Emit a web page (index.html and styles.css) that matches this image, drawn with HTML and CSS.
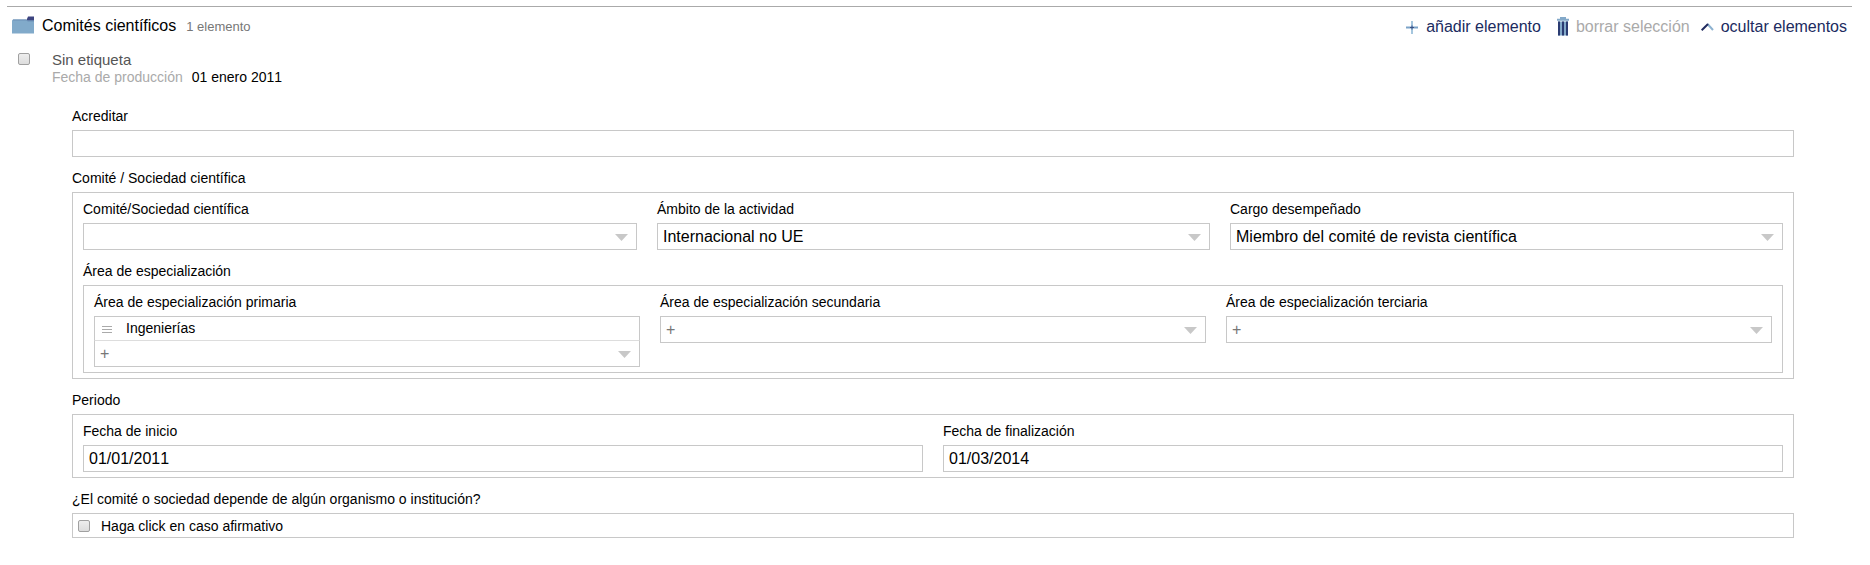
FILE: index.html
```html
<!DOCTYPE html>
<html lang="es">
<head>
<meta charset="utf-8">
<title>Comités científicos</title>
<link rel="stylesheet" href="styles.css">
</head>
<body>
<section class="collection">
  <header class="header">
    <svg class="folder" width="22" height="18" viewBox="0 0 22 18"><path d="M14.500 4L16 .5H22V5H14.500Z" fill="#3d4480"/><path d="M0 4.500L1 3.500H14L15.500 4.500H22V17.500H0Z" fill="#81aaca"/><path d="M1 4H14.500L15.500 5H22" stroke="#6c8fb5" fill="none"/></svg>
    <h1 class="title">Comités científicos</h1>
    <span class="count">1 elemento</span>
    <nav class="actions">
      <a class="action add"><svg width="12" height="13" viewBox="0 0 12 13"><path d="M6 0V13" stroke="#a5c6de" stroke-width="2"/><path d="M0 6.500H12" stroke="#7ba3c8" stroke-width="2"/><path d="M6 4.500V8.500M4 6.500H8" stroke="#3a5288"/></svg>añadir elemento</a>
      <a class="action remove"><svg width="12" height="19" viewBox="0 0 12 19"><path d="M4 2V.8H8V2M0 2.800H12" stroke="#83a9c9" stroke-width="2" fill="none"/><path d="M1 4.500H11V18.500H1Z" fill="#83a9c9"/><path d="M2 4.500V18.500M6 4.500V18.500M10 4.500V18.500" stroke="#2b3c72" stroke-width="2"/></svg>borrar selección</a>
      <a class="action toggle"><svg width="13" height="8" viewBox="0 0 13 8"><path d="M6.500 1L12 7" stroke="#8db2d0" stroke-width="2"/><path d="M.7 7.200L7 1" stroke="#202b60" stroke-width="2"/></svg>ocultar elementos</a>
    </nav>
  </header>
  <div class="item">
    <span class="checkbox"></span>
    <div>
      <div class="item-name">Sin etiqueta</div>
      <div class="item-date"><span class="muted">Fecha de producción</span><span>01 enero 2011</span></div>
    </div>
  </div>
  <form class="form">
    <div class="field"><label class="label">Acreditar</label><div class="input"></div></div>
    <div class="field"><div class="label">Comité / Sociedad científica</div>
      <div class="group">
        <div class="row committee">
          <div class="field"><label class="label">Comité/Sociedad científica</label><div class="input select"></div></div>
          <div class="field"><label class="label">Ámbito de la actividad</label><div class="input select">Internacional no UE</div></div>
          <div class="field"><label class="label">Cargo desempeñado</label><div class="input select">Miembro del comité de revista científica</div></div>
        </div>
        <div class="field"><div class="label">Área de especialización</div>
          <div class="group">
            <div class="row three">
              <div class="field"><label class="label">Área de especialización primaria</label>
                <div class="tag"><svg class="handle" width="10" height="7" viewBox="0 0 10 7"><path d="M0 .5H10M0 3.500H10M0 6.500H10" stroke="#aaa"/></svg>Ingenierías</div>
                <div class="input select plus tagged">+</div>
              </div>
              <div class="field"><label class="label">Área de especialización secundaria</label><div class="input select plus">+</div></div>
              <div class="field"><label class="label">Área de especialización terciaria</label><div class="input select plus">+</div></div>
            </div>
          </div>
        </div>
      </div>
    </div>
    <div class="field"><div class="label">Periodo</div>
      <div class="group">
        <div class="row two">
          <div class="field"><label class="label">Fecha de inicio</label><div class="input">01/01/2011</div></div>
          <div class="field"><label class="label">Fecha de finalización</label><div class="input">01/03/2014</div></div>
        </div>
      </div>
    </div>
    <div class="field"><div class="label">¿El comité o sociedad depende de algún organismo o institución?</div>
      <div class="check-row"><span class="checkbox"></span>Haga click en caso afirmativo</div>
    </div>
  </form>
</section>
</body>
</html>
```
FILE: styles.css
```css
* { box-sizing: border-box; }
body {
  margin: 0;
  background: #fff;
  color: #000;
  font: 14px/16px "Liberation Sans", Arial, sans-serif;
  font-kerning: none;
}
svg { display: block; flex: none; }
.collection { margin: 6px 18px 0 7px; border-top: 1px solid #aaa; }
.header { display: flex; height: 40px; padding: 9px 5px 0; align-items: flex-start; }
.title { margin: 1px 0 0 8px; font-size: 16px; line-height: 18px; font-weight: 400; }
.count { margin: 3px 0 0 10px; font-size: 13px; color: #777; }
.actions { display: flex; margin-left: auto; margin-top: 1px; }
.action { display: flex; align-items: center; font-size: 16px; line-height: 18px; color: #202b60; }
.add svg { margin: 1px 8px 0 0; }
.remove { margin-left: 16px; color: #aaa; }
.remove svg { margin: 0 7px 0 0; }
.toggle { margin-left: 11px; }
.toggle svg { margin-right: 7px; }
.item { display: flex; padding: 4px 0 0 11px; gap: 22px; height: 51px; }
.item > .checkbox { margin-top: 2px; }
.item-name { font-size: 15px; line-height: 17px; margin-bottom: 1px; color: #555; }
.item-date { display: flex; gap: 9px; }
.muted { color: #aaa; }
.checkbox {
  flex: none;
  width: 12px;
  height: 12px;
  border: 1px solid #a0a0a0;
  border-radius: 2px;
  background: linear-gradient(#eee, #ddd);
}
.form { margin: -3px 58px 0 65px; }
.label { display: block; padding: 13px 0 6px; }
.row .label { padding-top: 8px; }
.input {
  height: 27px;
  border: 1px solid #c8c8c8;
  padding: 0 5px;
  font-size: 16px;
  line-height: 25px;
}
.select { display: flex; justify-content: space-between; }
.select::after {
  content: "";
  width: 13px;
  height: 7px;
  margin: 10px 3px 0 auto;
  background: #c8c8c8;
  clip-path: polygon(0 0, 100% 0, 50% 100%);
}
.plus { color: #777; }
.group { border: 1px solid #c8c8c8; padding: 0 10px 5px; }
.row { display: grid; column-gap: 20px; align-items: start; }
.committee { grid-template-columns: 554fr 553fr 553fr; }
.three { grid-template-columns: repeat(3, 1fr); }
.two { grid-template-columns: repeat(2, 1fr); }
.tag {
  display: flex;
  align-items: center;
  gap: 14px;
  height: 24px;
  padding: 0 7px 1px;
  border: 1px solid #c8c8c8;
  border-bottom: 0;
}
.handle { margin-top: 3px; }
.tagged { border-top-color: #ddd; }
.check-row {
  display: flex;
  align-items: center;
  gap: 11px;
  height: 25px;
  padding: 0 5px;
  border: 1px solid #c8c8c8;
}
```
